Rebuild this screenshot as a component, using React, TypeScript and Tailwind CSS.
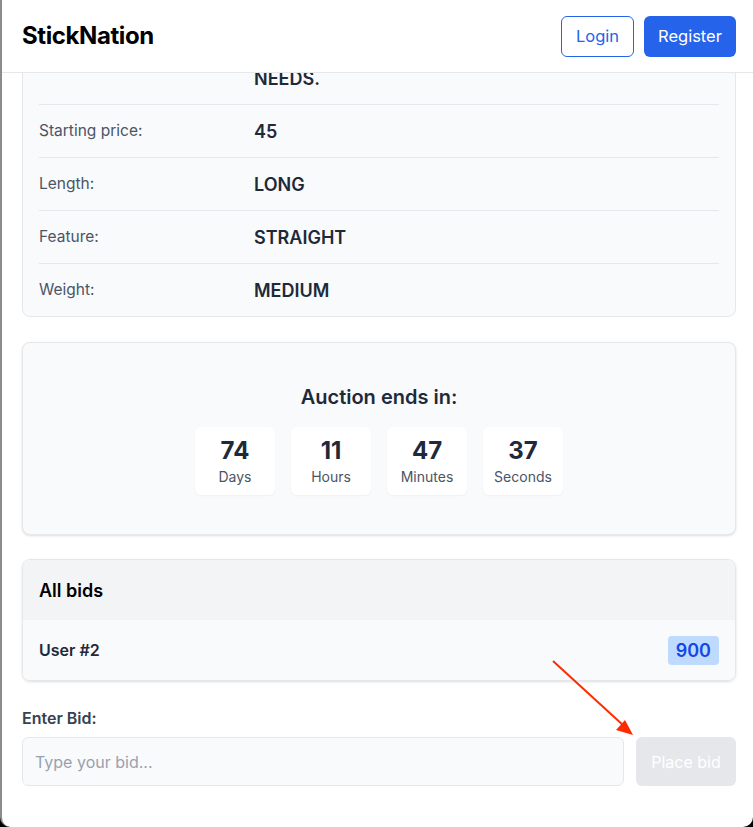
import { useState } from 'react'

type Detail = {
  label: string
  value: string
}

const details: Detail[] = [
  { label: 'Starting price:', value: '45' },
  { label: 'Length:', value: 'LONG' },
  { label: 'Feature:', value: 'STRAIGHT' },
  { label: 'Weight:', value: 'MEDIUM' },
]

const countdown = [
  { value: '74', label: 'Days' },
  { value: '11', label: 'Hours' },
  { value: '47', label: 'Minutes' },
  { value: '37', label: 'Seconds' },
]

const App = () => {
  const [bid, setBid] = useState('')

  return (
    <div className="bg-black min-h-[827px] font-['Inter',sans-serif]">
      <div className="relative bg-white min-h-[827px] border-l-2 border-[#8c8c8c] rounded-bl-[10px] rounded-br-[10px] overflow-hidden">
        {/* fixed header, content scrolls underneath */}
        <header className="fixed top-0 left-[2px] right-0 z-10 h-[73px] bg-white border-b border-gray-200 flex items-center justify-between pl-5 pr-[17px]">
          <h1 className="text-[24px] font-bold tracking-[-0.4px] text-black">StickNation</h1>
          <div className="flex items-center gap-[10px]">
            <button className="h-[41px] w-[73px] rounded-md border border-[#2563eb] text-[#2563eb] text-[16.5px]">
              Login
            </button>
            <button className="h-[41px] w-[92px] rounded-md bg-[#2563eb] text-white text-[16.5px]">
              Register
            </button>
          </div>
        </header>

        <main className="pt-[26px] pl-5 pr-[17px] pb-10">
          <div className="bg-gray-50 border border-gray-200 rounded-lg px-4">
            {/* description row, its top scrolled under the header */}
            <div className="flex items-end pt-[40px] pb-[13px] border-b border-gray-200">
              <span className="w-[215px] shrink-0" />
              <span className="text-[18px] font-semibold text-gray-800 leading-[24px]">NEEDS.</span>
            </div>
            {details.map((d, i) => (
              <div
                key={d.label}
                className={`flex items-center ${i < details.length - 1 ? 'h-[53px] border-b border-gray-200' : 'h-[52px]'}`}
              >
                <span className="w-[215px] text-[15.5px] text-gray-600">{d.label}</span>
                <span className="text-[18px] font-semibold text-gray-800">{d.value}</span>
              </div>
            ))}
          </div>

          <div className="mt-[25px] bg-gray-50 border border-gray-200 rounded-lg shadow-sm pt-10 pb-[39px] flex flex-col items-center">
            <h2 className="text-[20px] font-semibold text-gray-800 leading-7">Auction ends in:</h2>
            <div className="mt-[16px] flex gap-4">
              {countdown.map((c) => (
                <div
                  key={c.label}
                  className="w-20 h-[68px] bg-white rounded-md shadow-[0_1px_2px_rgba(0,0,0,0.04)] flex flex-col items-center justify-center"
                >
                  <span className="text-[24px] font-bold text-gray-800 leading-8">{c.value}</span>
                  <span className="text-[14px] text-gray-600 leading-5">{c.label}</span>
                </div>
              ))}
            </div>
          </div>

          <div className="mt-[24px] border border-gray-200 rounded-lg shadow-sm overflow-hidden">
            <div className="h-[60px] bg-gray-100 flex items-center px-4">
              <h3 className="text-[18px] font-semibold text-black">All bids</h3>
            </div>
            <div className="h-[60px] bg-gray-50 flex items-center justify-between px-4">
              <span className="text-[16px] font-semibold text-gray-800">User #2</span>
              <span className="h-[29px] px-2 flex items-center rounded bg-blue-200 text-blue-700 text-[18px] font-semibold">
                900
              </span>
            </div>
          </div>

          <div className="mt-[25px]">
            <label className="block text-[16px] font-semibold text-gray-700 leading-6">Enter Bid:</label>
            <div className="mt-[7px] flex gap-3">
              <input
                value={bid}
                onChange={(e) => setBid(e.target.value)}
                placeholder="Type your bid..."
                className="flex-1 h-[49px] px-3 bg-gray-50 border border-gray-200 rounded-md text-[16px] text-gray-800 placeholder:text-gray-400 outline-none"
              />
              <button
                disabled={!bid}
                className="w-[100px] h-[49px] rounded-md bg-gray-200 text-white text-[16px]"
              >
                Place bid
              </button>
            </div>
          </div>
        </main>

        {/* annotation arrow */}
        <svg
          className="absolute left-[548px] top-[658px] pointer-events-none"
          width="90"
          height="84"
          viewBox="0 0 90 84"
        >
          <line x1="3" y1="3" x2="74" y2="68" stroke="#ff2a00" strokeWidth="2" />
          <polygon points="83,77 66,72 75,62" fill="#ff2a00" />
        </svg>
      </div>
    </div>
  )
}

export default App
